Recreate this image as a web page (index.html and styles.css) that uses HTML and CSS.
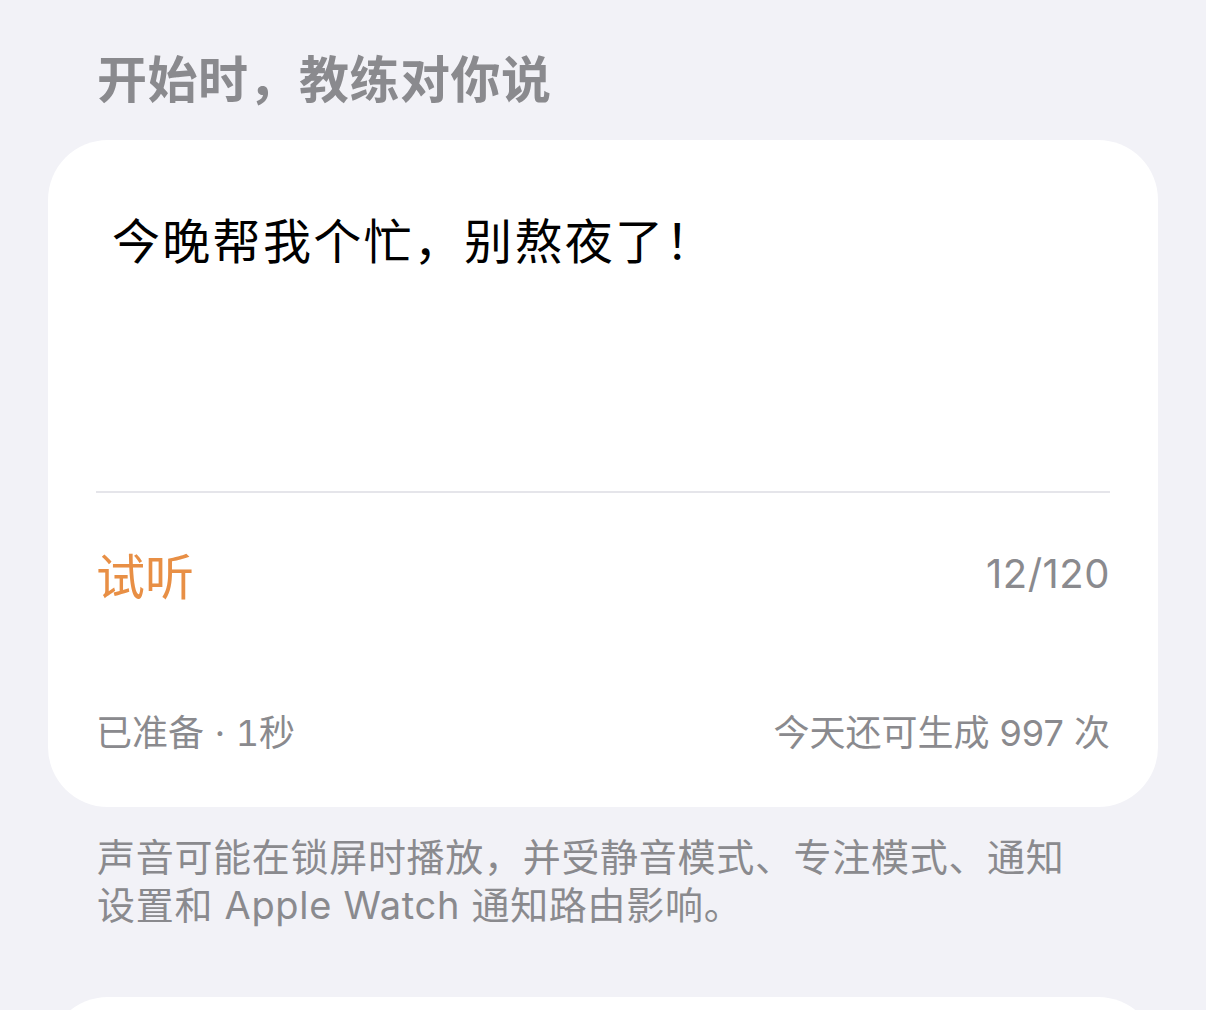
FILE: index.html
```html
<!DOCTYPE html>
<html lang="zh-CN">
<head>
<meta charset="utf-8">
<title>开始时，教练对你说</title>
<link rel="stylesheet" href="styles.css">
</head>
<body>
<div class="page">
  <h2 class="section-title">开始时，教练对你说</h2>
  <div class="card">
    <div class="message">今晚帮我个忙，别熬夜了！</div>
    <div class="divider"></div>
    <div class="row action-row">
      <span class="listen">试听</span>
      <span class="count">12/120</span>
    </div>
    <div class="row meta-row">
      <span class="meta meta-status">已准备 · 1秒</span>
      <span class="meta">今天还可生成 997 次</span>
    </div>
  </div>
  <p class="footnote">声音可能在锁屏时播放，并受静音模式、专注模式、通知设置和 Apple Watch 通知路由影响。</p>
  <div class="card next-card"></div>
</div>
</body>
</html>
```
FILE: styles.css
```css
html, body {
  margin: 0;
  padding: 0;
  background: #f2f2f7;
  overflow: hidden;
}
body {
  font-family: "Inter", "Noto Sans CJK SC", sans-serif;
  color: #000;
}
.page {
  padding: 0 48px;
}
.section-title {
  margin: 0;
  padding: 50px 0 0 49px;
  height: 140px;
  box-sizing: border-box;
  font-size: 50px;
  line-height: 60px;
  font-weight: 600;
  color: #8a8a8e;
  letter-spacing: 0.5px;
}
.card {
  background: #fff;
  border-radius: 60px;
  padding: 0 48px;
}
.message {
  height: 351px;
  box-sizing: border-box;
  padding: 72px 0 0 16px;
  font-size: 48px;
  line-height: 60px;
  letter-spacing: 2.3px;
}
.divider {
  height: 2px;
  background: #e5e5ea;
}
.row {
  display: flex;
  justify-content: space-between;
  align-items: center;
}
.action-row {
  height: 160px;
}
.meta-row {
  height: 154px;
}
.listen {
  font-size: 49px;
  color: #e88f45;
}
.count {
  font-size: 40px;
  color: #8a8a8e;
  letter-spacing: 0.5px;
}
.meta {
  font-size: 36px;
  color: #8a8a8e;
}
.meta-status {
  word-spacing: 1px;
  font-variant-numeric: tabular-nums;
}
.footnote {
  margin: 26px 0 0;
  padding-left: 49px;
  width: 975px;
  font-size: 38px;
  line-height: 48px;
  color: #8a8a8e;
  letter-spacing: 0.7px;
}
.next-card {
  margin-top: 68px;
  height: 200px;
}
```
